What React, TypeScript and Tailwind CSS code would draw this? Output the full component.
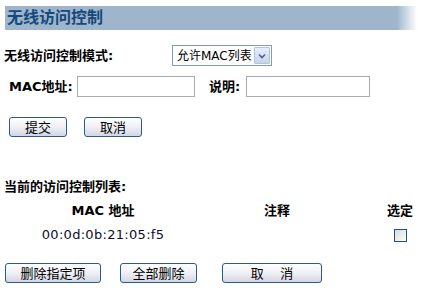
import React from 'react';

const font = 'font-["DejaVu_Sans","Noto_Sans_CJK_SC",sans-serif]';
const btn =
  'h-[20px] flex items-center justify-center rounded-[3px] border border-[#2b5b8c] bg-[linear-gradient(#ffffff,#f1f2f6_45%,#d3d6e3)] text-[13px] text-black leading-none';

export default function App() {
  return (
    <div className={`w-[429px] h-[299px] bg-white overflow-hidden ${font}`}>
      {/* Title bar */}
      <div className="mt-[6px] ml-[5px] w-[412px] h-[24px] flex items-center pl-[2px] bg-[linear-gradient(to_right,#9eb5cc_0%,#9eb5cc_95%,#ffffff_100%)]">
        <span className="text-[16px] font-bold text-[#15497a] leading-none">无线访问控制</span>
      </div>

      {/* Mode */}
      <div className="mt-[15px] h-[21px] flex items-center">
        <span className="ml-[4px] w-[168px] text-[13px] font-bold text-black">无线访问控制模式:</span>
        <div className="w-[100px] h-[21px] border border-[#7f9db9] bg-white flex items-center justify-between pl-[4px] pr-[1px]">
          <span className="text-[12px] text-black">允许MAC列表</span>
          <div className="w-[16px] h-[17px] border border-[#b5c4dd] bg-[linear-gradient(#e8eefa,#c7d3ec)] flex items-center justify-center rounded-[1px]">
            <svg width="8" height="6" viewBox="0 0 8 6">
              <path d="M1 1.5 L4 4.5 L7 1.5" stroke="#4d6185" strokeWidth="1.6" fill="none" />
            </svg>
          </div>
        </div>
      </div>

      {/* MAC / note */}
      <div className="mt-[10px] h-[21px] flex items-center">
        <span className="ml-[9px] w-[68px] text-[13px] font-bold text-black">MAC地址:</span>
        <div className="w-[118px] h-[21px] border border-[#a5acb2] bg-white" />
        <span className="ml-[14px] w-[37px] text-[13px] font-bold text-black">说明:</span>
        <div className="w-[124px] h-[21px] border border-[#a5acb2] bg-white" />
      </div>

      {/* Submit */}
      <div className="mt-[20px] flex items-center">
        <button className={`${btn} ml-[9px] w-[58px]`}>提交</button>
        <button className={`${btn} ml-[17px] w-[58px]`}>取消</button>
      </div>

      {/* List */}
      <div className="mt-[43px] ml-[4px] text-[13px] font-bold text-black leading-[14px]">当前的访问控制列表:</div>

      <div className="mt-[9px] flex items-center h-[16px] text-[13px] font-bold text-black">
        <div className="ml-[4px] w-[198px] text-center">MAC 地址</div>
        <div className="w-[150px] text-center">注释</div>
        <div className="ml-[23px] w-[50px] text-center">选定</div>
      </div>

      <div className="mt-[8px] flex items-center h-[16px] text-[13px] text-[#0d0d2a]">
        <div className="ml-[4px] w-[198px] text-center tracking-[0.3px]">00:0d:0b:21:05:f5</div>
        <div className="w-[150px]" />
        <div className="ml-[23px] w-[50px] flex justify-center">
          <div className="w-[13px] h-[13px] border border-[#1c5180] bg-[linear-gradient(135deg,#dcdcd7,#fbfbf9)]" />
        </div>
      </div>

      {/* Bottom buttons */}
      <div className="mt-[20px] flex items-center">
        <button className={`${btn} ml-[5px] w-[96px]`}>删除指定项</button>
        <button className={`${btn} ml-[19px] w-[77px]`}>全部删除</button>
        <button className={`${btn} ml-[25px] w-[100px]`}>取&nbsp;&nbsp;&nbsp;&nbsp;消</button>
      </div>
    </div>
  );
}
